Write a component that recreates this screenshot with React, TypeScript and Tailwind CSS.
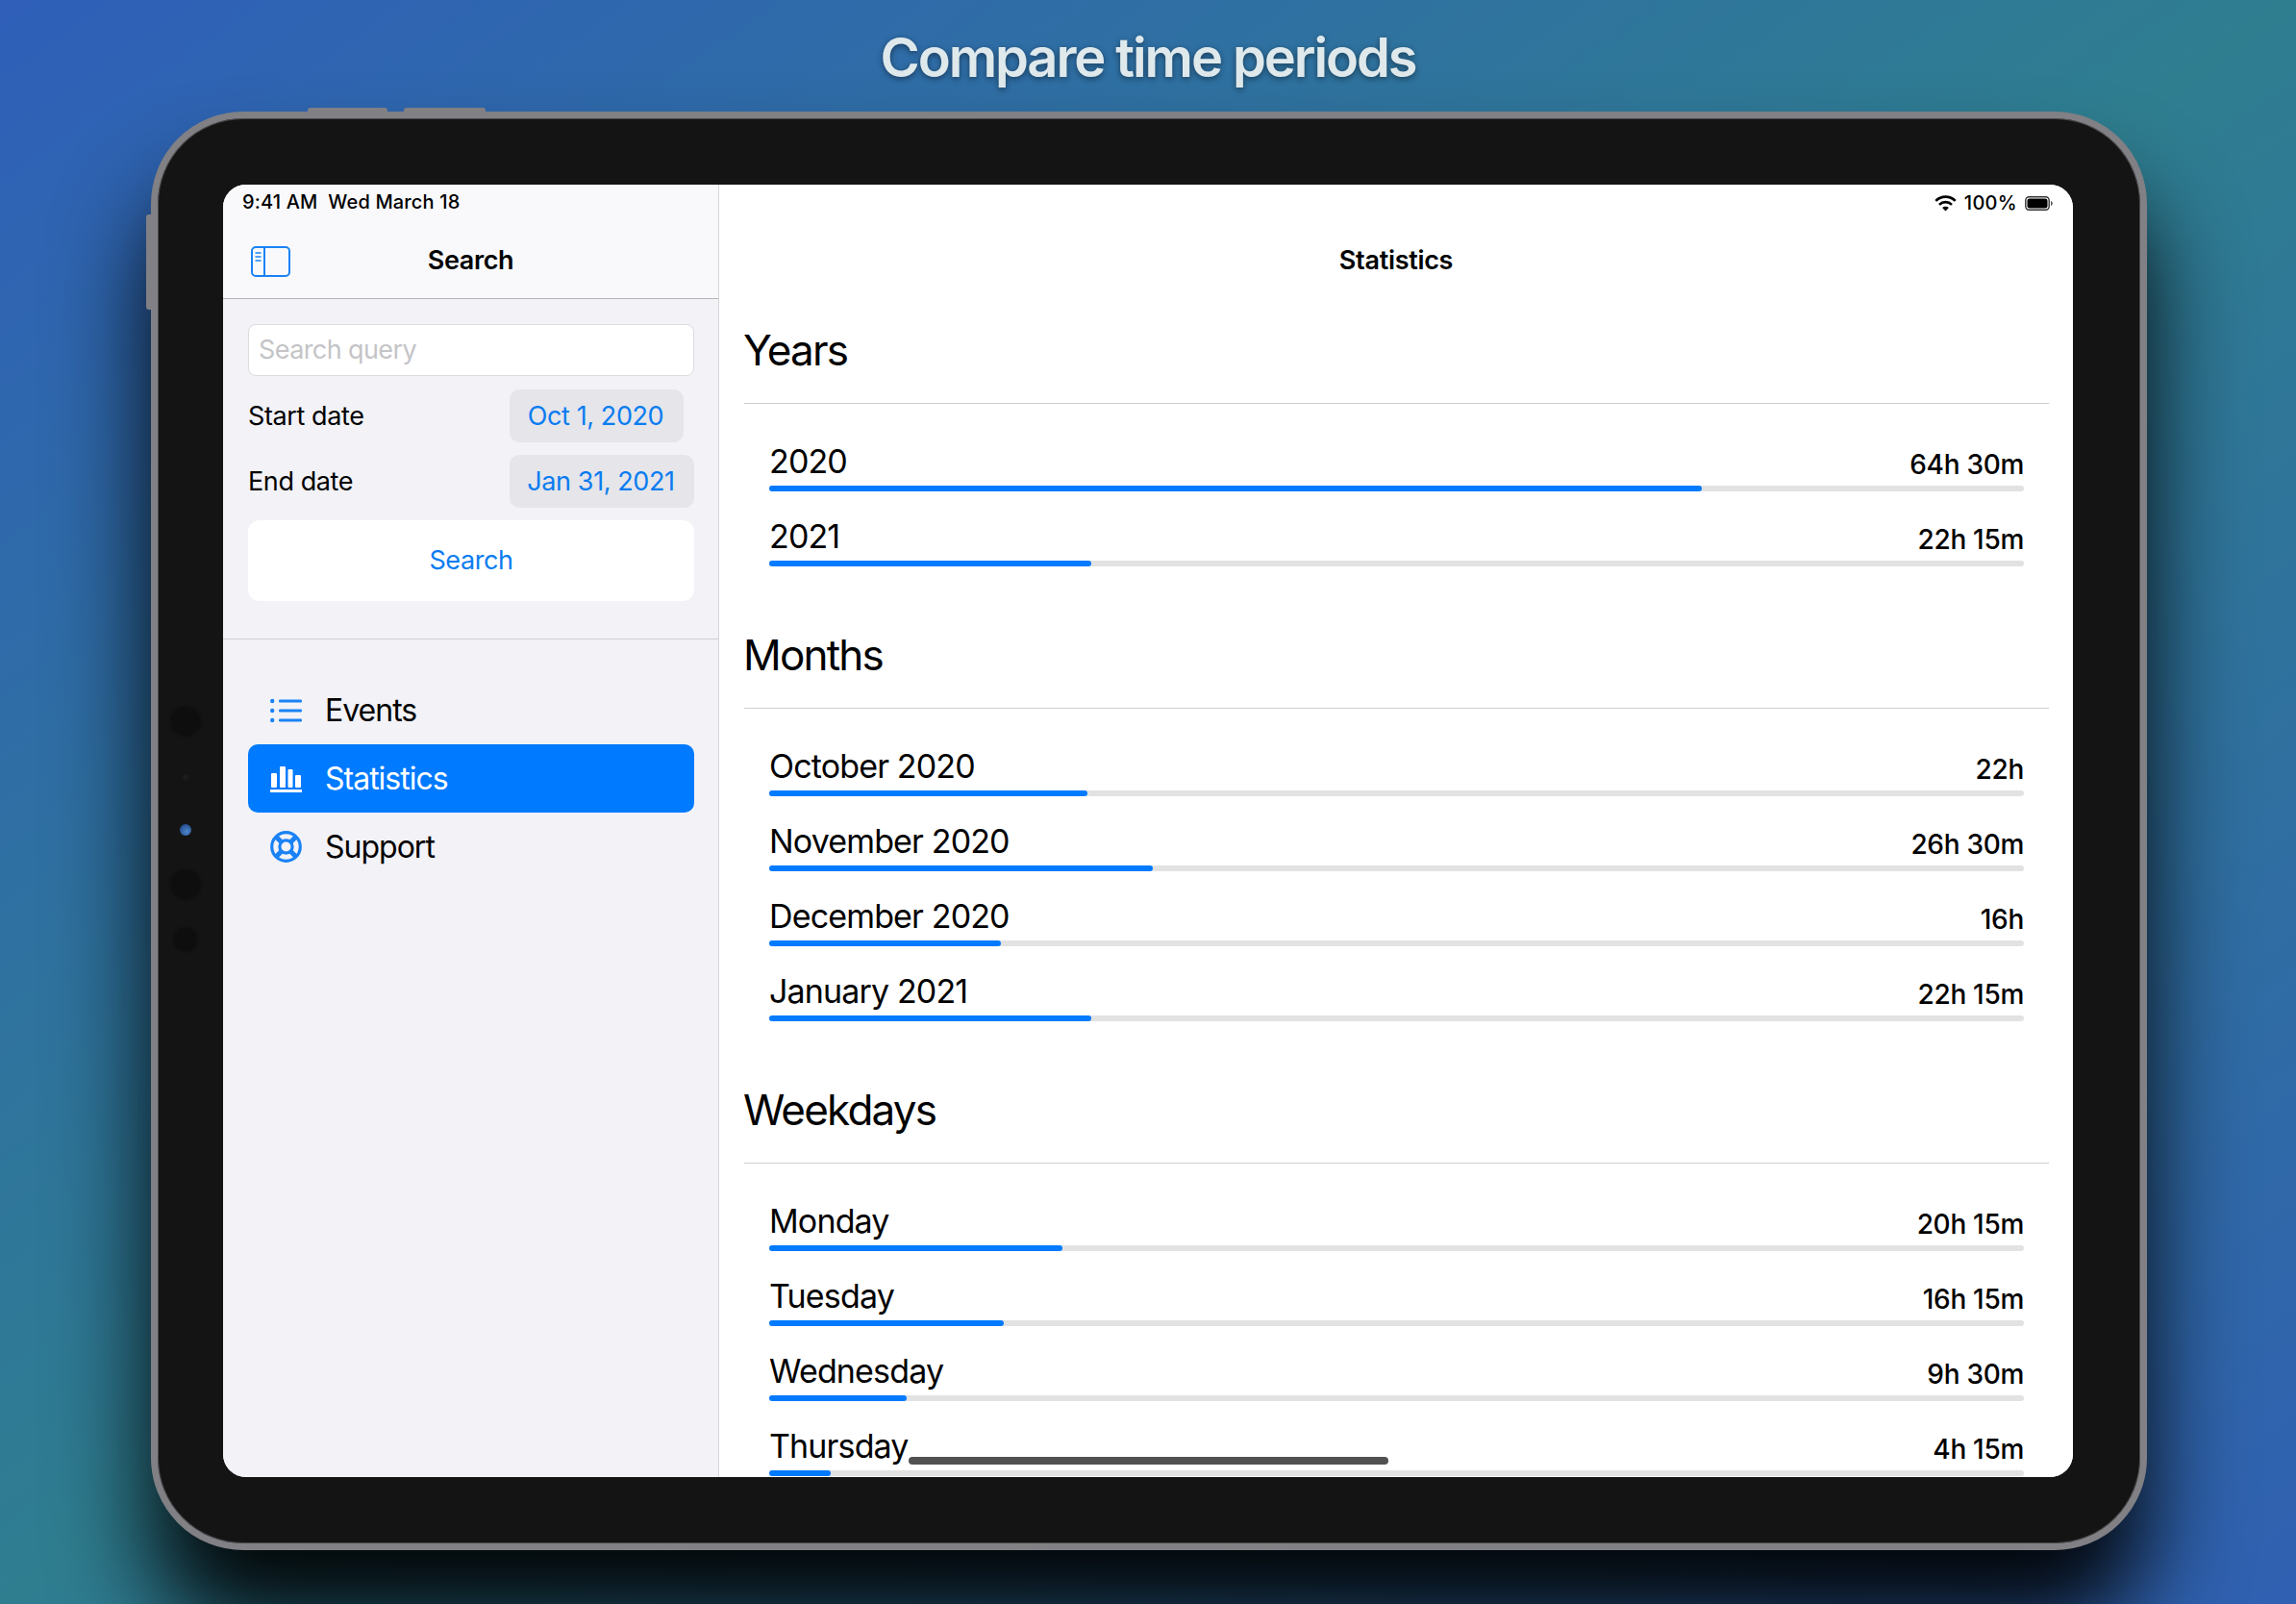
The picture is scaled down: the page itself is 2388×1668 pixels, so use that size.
const TOTAL_MINUTES = 5205;

type StatRow = { label: string; time: string; minutes: number };

const sections: { title: string; rows: StatRow[] }[] = [
  {
    title: "Years",
    rows: [
      { label: "2020", time: "64h 30m", minutes: 3870 },
      { label: "2021", time: "22h 15m", minutes: 1335 },
    ],
  },
  {
    title: "Months",
    rows: [
      { label: "October 2020", time: "22h", minutes: 1320 },
      { label: "November 2020", time: "26h 30m", minutes: 1590 },
      { label: "December 2020", time: "16h", minutes: 960 },
      { label: "January 2021", time: "22h 15m", minutes: 1335 },
    ],
  },
  {
    title: "Weekdays",
    rows: [
      { label: "Monday", time: "20h 15m", minutes: 1215 },
      { label: "Tuesday", time: "16h 15m", minutes: 975 },
      { label: "Wednesday", time: "9h 30m", minutes: 570 },
      { label: "Thursday", time: "4h 15m", minutes: 255 },
    ],
  },
];

function SidebarIcon() {
  return (
    <svg width="41" height="32" viewBox="0 0 41 32" fill="none" stroke="#1a82f5" strokeWidth="2">
      <rect x="1" y="1" width="39" height="30" rx="4" />
      <path d="M14 1v30" />
      <path d="M4.5 7h6M4.5 11h6M4.5 15h6" strokeWidth="1.6" />
    </svg>
  );
}

function ListIcon() {
  return (
    <svg width="33" height="26" viewBox="0 0 33 26" fill="#1a82f5">
      <circle cx="2.2" cy="3" r="2.2" />
      <circle cx="2.2" cy="13" r="2.2" />
      <circle cx="2.2" cy="23" r="2.2" />
      <rect x="9" y="1.6" width="24" height="2.8" rx="1.2" />
      <rect x="9" y="11.6" width="24" height="2.8" rx="1.2" />
      <rect x="9" y="21.6" width="24" height="2.8" rx="1.2" />
    </svg>
  );
}

function BarsIcon() {
  return (
    <svg width="33" height="28" viewBox="0 0 33 28" fill="#ffffff">
      <rect x="1" y="8" width="6" height="15" rx="1" />
      <rect x="10" y="1" width="6" height="22" rx="1" />
      <rect x="18.5" y="4" width="5" height="19" rx="1" />
      <rect x="26" y="10" width="6" height="13" rx="1" />
      <rect x="0" y="25" width="33" height="3" rx="0.5" />
    </svg>
  );
}

function LifebuoyIcon() {
  return (
    <svg width="33" height="33" viewBox="0 0 33 33" fill="none" stroke="#1a82f5">
      <circle cx="16.5" cy="16.5" r="14.8" strokeWidth="3.2" />
      <circle cx="16.5" cy="16.5" r="6.6" strokeWidth="3.2" />
      <path d="M6 6l6 6M27 6l-6 6M6 27l6-6M27 27l-6-6" strokeWidth="5" />
    </svg>
  );
}

function WifiIcon() {
  return (
    <svg width="23" height="17" viewBox="0 0 23 17" fill="none" stroke="#000000" strokeWidth="2.6">
      <path d="M1.3 5.8a14.5 14.5 0 0 1 20.4 0" />
      <path d="M5 9.8a9.2 9.2 0 0 1 13 0" />
      <path d="M11.5 16.6l-3.4-3.5a4.8 4.8 0 0 1 6.8 0z" fill="#000000" stroke="none" />
    </svg>
  );
}

function BatteryIcon() {
  return (
    <svg width="29" height="15" viewBox="0 0 29 15" fill="none">
      <rect x="0.8" y="0.8" width="24.4" height="13.4" rx="3.6" stroke="#333333" strokeWidth="1.4" />
      <rect x="2.5" y="2.5" width="21" height="10" rx="2.2" fill="#000000" />
      <path d="M27 5v5c1-.3 1.8-1.3 1.8-2.5S28 5.300 27 5z" fill="#555555" />
    </svg>
  );
}

function NavItem({ icon, label, active }: { icon: React.ReactNode; label: string; active?: boolean }) {
  return (
    <div
      className={`flex h-[71px] items-center rounded-[10px] pl-[23px] ${
        active ? "bg-[#007aff] text-white" : "text-black"
      }`}
    >
      <span className="flex w-[33px] justify-center">{icon}</span>
      <span className="ml-[24px] text-[32px] tracking-[-1px]">{label}</span>
    </div>
  );
}

function Sidebar() {
  return (
    <aside className="flex w-[516px] shrink-0 flex-col border-r border-[#d6d6d9] bg-[#f2f2f7]">
      <div className="relative h-[119px] shrink-0 border-b border-[#b4b4b8] bg-[#f9f9fb]">
        <div className="pl-[20px] pt-[6px] text-[20px] leading-[24px] font-medium tracking-[0.15px]">
          9:41 AM&nbsp; Wed March 18
        </div>
        <div className="flex h-[88px] items-center justify-center pt-[10px] text-[27px] font-semibold tracking-[-0.4px]">
          Search
        </div>
        <div className="absolute left-[29px] top-[64px]">
          <SidebarIcon />
        </div>
      </div>

      <div className="pl-[26px] pr-[25px] pt-[26px]">
        <div className="flex h-[54px] w-full items-center rounded-[8px] border border-[#dcdcdf] bg-white pl-[10px] pt-[1px] text-[27px] tracking-[-0.6px] text-[#c4c4c7]">
          Search query
        </div>
        <div className="mt-[14px] flex h-[55px] items-center justify-between text-[27px] tracking-[-0.4px]">
          <span className="pt-[1px]">Start date</span>
          <span className="mr-[11px] flex h-full w-[181px] items-center justify-center rounded-[10px] bg-[#e5e5ea] pr-[2px] pt-[1px] text-[#0a7cf0]">
            Oct 1, 2020
          </span>
        </div>
        <div className="mt-[13px] flex h-[55px] items-center justify-between text-[27px] tracking-[-0.4px]">
          <span className="pt-[1px]">End date</span>
          <span className="flex h-full w-[192px] items-center justify-center rounded-[10px] bg-[#e5e5ea] pr-[2px] pt-[1px] text-[#0a7cf0]">
            Jan 31, 2021
          </span>
        </div>
        <div className="mt-[13px] flex h-[84px] items-center justify-center rounded-[12px] bg-white pt-[1px] text-[27px] tracking-[-0.4px] text-[#0a7cf0]">
          Search
        </div>
      </div>

      <div className="mt-[39px] border-t border-[#d0d0d4]" />

      <nav className="mt-[38px] pl-[26px] pr-[25px]">
        <NavItem icon={<ListIcon />} label="Events" />
        <NavItem icon={<BarsIcon />} label="Statistics" active />
        <NavItem icon={<LifebuoyIcon />} label="Support" />
      </nav>
    </aside>
  );
}

function Row({ row }: { row: StatRow }) {
  return (
    <div className="flex h-[78px] flex-col justify-end">
      <div className="flex items-end justify-between">
        <span className="pb-[1px] text-[34px] leading-[44px] tracking-[-0.85px]">{row.label}</span>
        <span className="text-[28px] leading-[40px] font-medium tracking-[-0.3px]">{row.time}</span>
      </div>
      <div className="mt-[2px] h-[6px] rounded-full bg-[#e2e2e2]">
        <div
          className="h-full rounded-full bg-[#007aff]"
          style={{ width: `${(row.minutes / TOTAL_MINUTES) * 100}%` }}
        />
      </div>
    </div>
  );
}

function Section({ title, rows }: { title: string; rows: StatRow[] }) {
  return (
    <section className="mb-[64px]">
      <div className="border-b border-[#cfcfd2] pb-[27px]">
        <h2 className="-ml-[1px] text-[44px] leading-[56px] tracking-[-1.8px]">{title}</h2>
      </div>
      <div className="px-[26px] pt-[13px]">
        {rows.map((row) => (
          <Row key={row.label} row={row} />
        ))}
      </div>
    </section>
  );
}

function Main() {
  return (
    <main className="min-w-0 flex-1 bg-white">
      <div className="flex h-[24px] items-center justify-end gap-[8px] pr-[21px] pt-[14px] text-[20px] font-medium tracking-[0.3px]">
        <WifiIcon />
        <span>100%</span>
        <BatteryIcon />
      </div>
      <div className="flex h-[95px] items-center justify-center pt-[15px] text-[27px] font-semibold tracking-[-0.3px]">
        Statistics
      </div>
      <div className="pl-[26px] pr-[25px] pt-[25px]">
        {sections.map((section) => (
          <Section key={section.title} title={section.title} rows={section.rows} />
        ))}
      </div>
    </main>
  );
}

export default function App() {
  return (
    <div className="h-[1668px] w-[2388px] overflow-hidden bg-[linear-gradient(to_bottom_right,#2f5fb9_0%,#2f7e90_50%,#3060b2_100%)] font-['Inter',sans-serif] text-black">
      <h1 className="flex h-[116px] items-center justify-center pt-[4px] text-[56px] font-semibold tracking-[-2.1px] text-[#dfe9ec] [text-shadow:0_2px_6px_rgba(0,0,0,0.45)]">
        Compare time periods
      </h1>
      <div className="relative ml-[157px] h-[1496px] w-[2076px] rounded-[96px] border-[7px] border-[#808085] bg-[#141414] py-[69px] pl-[68px] pr-[70px] shadow-[0_80px_100px_rgba(0,0,0,0.95),inset_0_0_0_1px_#4a4a4c]">
        <div className="absolute left-[156px] top-[-11px] h-[4px] w-[83px] rounded-t-[3px] bg-[#808085]" />
        <div className="absolute left-[256px] top-[-11px] h-[4px] w-[85px] rounded-t-[3px] bg-[#808085]" />
        <div className="absolute left-[-12px] top-[100px] h-[99px] w-[5px] rounded-l-[3px] bg-[#808085]" />

        <div className="absolute left-[13px] top-[611px] h-[32px] w-[32px] rounded-full bg-[#0e0e0e] blur-[1px]" />
        <div className="absolute left-[26px] top-[682px] h-[6px] w-[6px] rounded-full bg-[#1c1c1c]" />
        <div className="absolute left-[23px] top-[734px] h-[12px] w-[12px] rounded-full bg-[radial-gradient(circle_at_60%_65%,#4d86cc,#163a78)]" />
        <div className="absolute left-[13px] top-[781px] h-[32px] w-[32px] rounded-full bg-[#0e0e0e] blur-[1px]" />
        <div className="absolute left-[16px] top-[841px] h-[26px] w-[26px] rounded-full bg-[#0e0e0e] blur-[1px]" />

        <div className="relative flex h-[1344px] w-[1924px] overflow-hidden rounded-[24px] bg-white">
          <Sidebar />
          <Main />
          <div className="absolute bottom-[13px] left-[713px] h-[8px] w-[499px] rounded-full bg-[#515151]" />
        </div>
      </div>
    </div>
  );
}
